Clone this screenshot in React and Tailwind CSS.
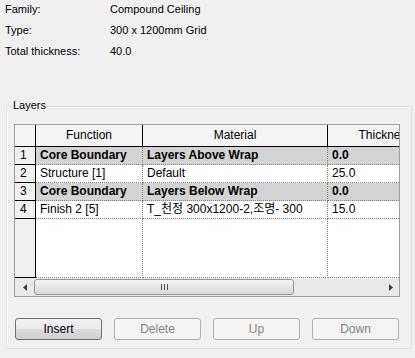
import React from 'react';

const rows = [
  { n: 1, fn: 'Core Boundary', mat: 'Layers Above Wrap', th: '0.0', bold: true },
  { n: 2, fn: 'Structure [1]', mat: 'Default', th: '25.0' },
  { n: 3, fn: 'Core Boundary', mat: 'Layers Below Wrap', th: '0.0', bold: true },
  { n: 4, fn: 'Finish 2 [5]', mat: 'T_천정 300x1200-2,조명- 300', th: '15.0' },
];

const info = [
  ['Family:', 'Compound Ceiling'],
  ['Type:', '300 x 1200mm Grid'],
  ['Total thickness:', '40.0'],
];

const Button = ({ label, disabled }) => (
  <button
    className={`w-[87px] h-[22px] rounded-[3px] border text-[12px] leading-[20px] ${
      disabled
        ? 'border-[#adb2b5] bg-[#f4f4f4] text-[#838383]'
        : 'border-[#707070] bg-[linear-gradient(#f2f2f2_0%,#ebebeb_50%,#dddddd_51%,#cfcfcf_100%)] text-black'
    }`}
  >
    {label}
  </button>
);

const App = () => {
  return (
    <div className="w-[415px] h-[358px] bg-[#f0f0f0] overflow-hidden font-['Liberation_Sans','Noto_Sans_CJK_KR',sans-serif] text-black">
      {/* Type info */}
      <div className="pt-[2px] pl-[5px] flex flex-col gap-[7px] text-[11px] leading-[14px]">
        {info.map(([k, v]) => (
          <div key={k} className="flex">
            <span className="w-[105px]">{k}</span>
            <span>{v}</span>
          </div>
        ))}
      </div>

      {/* Layers group */}
      <div className="relative mt-[48px] ml-[6px] w-[406px] h-[243px] border border-[#d5dfe5] rounded-[3px] shadow-[inset_1px_1px_0_#ffffff] pl-[7px] pt-[17px]">
        <span className="absolute top-[-9px] left-[5px] px-[1px] bg-[#f0f0f0] text-[11px] leading-[14px]">Layers</span>

        <div className="w-[386px] h-[173px] border border-[#a0a0a0] bg-white overflow-hidden flex flex-col text-[12px]">
          {/* header */}
          <div className="flex h-[22px] shrink-0 bg-[#f4f4f4]">
            <div className="w-[21px] shrink-0 border-r border-b border-black" />
            <div className="w-[107px] shrink-0 border-r border-b border-black text-center leading-[21px]">Function</div>
            <div className="w-[185px] shrink-0 border-r border-b border-black text-center leading-[21px]">Material</div>
            <div className="w-[115px] shrink-0 border-b border-black text-center leading-[21px]">Thickness</div>
          </div>

          {rows.map((r) => (
            <div key={r.n} className={`flex h-[18px] shrink-0 leading-[17px] ${r.bold ? 'font-bold' : ''}`}>
              <div className="w-[21px] shrink-0 bg-[#f0f0f0] border-r border-b border-black pl-[5px] font-normal">{r.n}</div>
              <div className={`w-[107px] shrink-0 border-r border-b border-dotted border-[#808080] pl-[4px] whitespace-nowrap ${r.bold ? 'bg-[#d3d3d3]' : ''}`}>{r.fn}</div>
              <div className={`w-[185px] shrink-0 border-r border-b border-dotted border-[#808080] pl-[4px] whitespace-nowrap overflow-hidden ${r.bold ? 'bg-[#d3d3d3]' : ''}`}>{r.mat}</div>
              <div className={`w-[115px] shrink-0 border-b border-dotted border-[#808080] pl-[4px] ${r.bold ? 'bg-[#d3d3d3]' : ''}`}>{r.th}</div>
            </div>
          ))}

          {/* empty area */}
          <div className="flex h-[59px] shrink-0">
            <div className="w-[21px] shrink-0 bg-[#f0f0f0] border-r border-b border-black" />
            <div className="w-[107px] shrink-0 border-r border-b border-dotted border-[#808080]" />
            <div className="w-[185px] shrink-0 border-r border-b border-dotted border-[#808080]" />
            <div className="w-[115px] shrink-0 border-b border-dotted border-[#808080]" />
          </div>

          {/* horizontal scrollbar */}
          <div className="flex items-center h-[18px] shrink-0 bg-[#e9e9e9]">
            <div className="w-[19px] h-full shrink-0 flex items-center justify-center">
              <svg width="4" height="7" viewBox="0 0 4 7"><path d="M4 0 L0 3.5 L4 7 Z" fill="#404040" /></svg>
            </div>
            <div className="w-[260px] h-[16px] shrink-0 rounded-[3px] border border-[#979797] bg-[linear-gradient(#f3f3f3,#e6e6e6_50%,#d6d6d6)] flex items-center justify-center gap-[2px]">
              <span className="w-px h-[6px] bg-[#555]" />
              <span className="w-px h-[6px] bg-[#555]" />
              <span className="w-px h-[6px] bg-[#555]" />
            </div>
            <div className="flex-1" />
            <div className="w-[17px] h-full shrink-0 flex items-center justify-center">
              <svg width="4" height="7" viewBox="0 0 4 7"><path d="M0 0 L4 3.5 L0 7 Z" fill="#404040" /></svg>
            </div>
          </div>
        </div>

        <div className="flex gap-[12px] mt-[21px] pl-[1px]">
          <Button label="Insert" />
          <Button label="Delete" disabled />
          <Button label="Up" disabled />
          <Button label="Down" disabled />
        </div>
      </div>
    </div>
  );
};

export default App;
